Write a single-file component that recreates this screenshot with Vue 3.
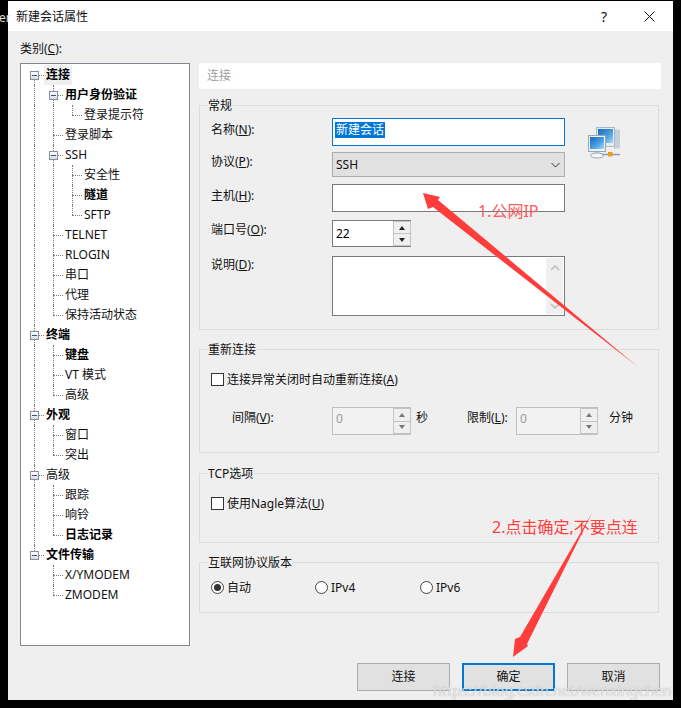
<script setup>
const rows = [
  ['连接', 1, 'xf'], ['用户身份验证', 1, 'v xm'], ['登录提示符', 0, 'v v e'], ['登录脚本', 0, 'v t'],
  ['SSH', 0, 'v xm'], ['安全性', 0, 'v v t'], ['隧道', 1, 'v v t'], ['SFTP', 0, 'v v e'],
  ['TELNET', 0, 'v t'], ['RLOGIN', 0, 'v t'], ['串口', 0, 'v t'], ['代理', 0, 'v t'],
  ['保持活动状态', 0, 'v e'], ['终端', 1, 'xm'], ['键盘', 1, 'v t'], ['VT 模式', 0, 'v t'],
  ['高级', 0, 'v e'], ['外观', 1, 'xm'], ['窗口', 0, 'v t'], ['突出', 0, 'v e'],
  ['高级', 0, 'xm'], ['跟踪', 0, 'v t'], ['响铃', 0, 'v t'], ['日志记录', 1, 'v e'],
  ['文件传输', 1, 'xl'], ['X/YMODEM', 0, 'b t'], ['ZMODEM', 0, 'b e']
].map(([text, bold, cells], i) => ({ id: i, text, bold: !!bold, selected: i === 0, cells: cells.split(' ') }))
</script>

<template>
  <div class="screen">
    <span class="behind">er</span>
    <div class="window">
      <header class="titlebar">
        <span class="title">新建会话属性</span>
        <span class="help">?</span>
        <svg class="close" width="11" height="11" viewBox="0 0 11 11"><path d="M.5.5l10 10M10.5.5l-10 10" stroke="#111" stroke-width="1" fill="none"/></svg>
      </header>
      <div class="body">
        <div class="main">
          <div class="cat-label">类别(<u>C</u>):</div>
          <div class="tree">
            <div v-for="r in rows" :key="r.id" class="tree-row">
              <span v-for="(c, n) in r.cells" :key="n" class="cell" :class="c">
                <span v-if="c[0] === 'x'" class="exp"><i></i></span>
              </span>
              <span class="node" :class="{ bold: r.bold, sel: r.selected }">{{ r.text }}</span>
            </div>
          </div>
          <div class="pane">
            <div class="pane-head">连接</div>

            <section class="group g1">
              <span class="legend">常规</span>
              <div class="g1-inner">
                <div class="form">
                  <div class="frow r1"><label class="lab">名称(<u>N</u>):</label><div class="input focus"><span class="selected">新建会话</span></div></div>
                  <div class="frow r2"><label class="lab">协议(<u>P</u>):</label>
                    <div class="select"><span>SSH</span>
                      <svg width="9" height="6" viewBox="0 0 9 6"><path d="M.5 1l4 4 4-4" stroke="#333" fill="none"/></svg>
                    </div>
                  </div>
                  <div class="frow r3"><label class="lab">主机(<u>H</u>):</label><div class="input plain"></div></div>
                  <div class="frow r4"><label class="lab">端口号(<u>O</u>):</label>
                    <div class="spin port"><span class="val">22</span>
                      <div class="btns"><span class="sb"><i class="up"></i></span><span class="sb"><i class="down"></i></span></div>
                    </div>
                  </div>
                  <div class="frow r5"><label class="lab">说明(<u>D</u>):</label>
                    <div class="textarea">
                      <div class="scroll">
                        <svg width="10" height="6" viewBox="0 0 10 6"><path d="M1 5l4-4 4 4" stroke="#c0c0c0" stroke-width="1.6" fill="none"/></svg>
                        <svg width="10" height="6" viewBox="0 0 10 6"><path d="M1 1l4 4 4-4" stroke="#c0c0c0" stroke-width="1.6" fill="none"/></svg>
                      </div>
                    </div>
                  </div>
                </div>
                <svg class="net" width="32" height="32" viewBox="0 0 32 32">
                  <defs>
                    <linearGradient id="scr" x1="0" y1="0" x2="1" y2="1"><stop offset="0" stop-color="#1668bd"/><stop offset=".6" stop-color="#4fa3e0"/><stop offset="1" stop-color="#a9d8f5"/></linearGradient>
                  </defs>
                  <path d="M26 2l6 1v18l-6 1z" fill="#c4d0da"/>
                  <rect x="8.5" y=".5" width="18" height="19" fill="#e4ebf1" stroke="#a8b8c6"/>
                  <rect x="10" y="2" width="15" height="14" fill="url(#scr)"/>
                  <rect x=".5" y="8.5" width="17" height="16" fill="#f0f3f6" stroke="#95a8b9"/>
                  <rect x="2" y="10" width="14" height="12" fill="url(#scr)"/>
                  <path d="M6 25h6l1 2H5z" fill="#d6dde4"/>
                  <ellipse cx="9" cy="28.5" rx="6.5" ry="2.5" fill="#f4f6f8" stroke="#95a8b9"/>
                  <path d="M14 27.5h18" stroke="#8f9ca8" stroke-width="1.5"/>
                  <rect x="20" y="25" width="4.5" height="4.5" fill="#f09a1a"/>
                </svg>
              </div>
            </section>

            <section class="group g2">
              <span class="legend">重新连接</span>
              <div class="optrow"><span class="check"></span><span>连接异常关闭时自动重新连接(<u>A</u>)</span></div>
              <div class="interval">
                <label class="i-lab">间隔(<u>V</u>):</label>
                <div class="spin dis w79"><span class="val">0</span>
                  <div class="btns"><span class="sb"><i class="up"></i></span><span class="sb"><i class="down"></i></span></div>
                </div>
                <span class="unit1">秒</span>
                <label class="l-lab">限制(<u>L</u>):</label>
                <div class="spin dis w82"><span class="val">0</span>
                  <div class="btns"><span class="sb"><i class="up"></i></span><span class="sb"><i class="down"></i></span></div>
                </div>
                <span class="unit2">分钟</span>
              </div>
            </section>

            <section class="group g3">
              <span class="legend">TCP选项</span>
              <div class="optrow"><span class="check"></span><span>使用Nagle算法(<u>U</u>)</span></div>
            </section>

            <section class="group g4">
              <span class="legend">互联网协议版本</span>
              <div class="radios">
                <div class="radio-opt o1"><span class="radio on"></span><span>自动</span></div>
                <div class="radio-opt o2"><span class="radio"></span><span>IPv4</span></div>
                <div class="radio-opt"><span class="radio"></span><span>IPv6</span></div>
              </div>
            </section>
          </div>
        </div>
        <footer class="footer">
          <button class="btn">连接</button>
          <button class="btn default">确定</button>
          <button class="btn">取消</button>
        </footer>
      </div>
    </div>

    <svg class="arrows" width="681" height="708" viewBox="0 0 681 708">
      <polygon points="423,193 440,197 438,200 638,367 433,207 428,209" fill="#ff3d3d"/>
      <polygon points="513,657 515,639 520,637 592,513 527,644 528,646" fill="#ff3d3d"/>
    </svg>
    <span class="note n1">1.公网IP</span>
    <span class="note n2">2.点击确定,不要点连</span>
    <span class="mark">https://blog.csdn.net/wenxingchen</span>
  </div>
</template>

<style>
html, body { margin: 0; background: #000; }
</style>

<style scoped>
.screen {
  position: relative;
  width: 681px;
  height: 708px;
  overflow: hidden;
  background: #000;
  padding: 1px 8px 8px;
  box-sizing: border-box;
  font-family: "Noto Sans", "Noto Sans CJK SC", sans-serif;
  font-size: 12px;
  color: #000;
}
.behind { position: absolute; left: -1px; top: 10px; color: #ddd; line-height: 16px; }
.window { height: 699px; background: #efefef; display: flex; flex-direction: column; }
.titlebar { height: 30px; flex: none; background: #fff; display: flex; align-items: center; padding: 0 18px 0 8px; box-sizing: border-box; }
.title { flex: 1; color: #111; }
.help { font-size: 14px; margin-right: 37px; color: #111; }
.close { flex: none; }
.body { flex: 1; display: flex; flex-direction: column; }
.main { display: grid; grid-template-columns: 170px 462px; grid-template-rows: 16px 583px; column-gap: 9px; padding: 10px 0 0 12px; row-gap: 6px; }
.cat-label { grid-column: 1; line-height: 16px; color: #111; }
.tree { grid-column: 1; grid-row: 2; border: 1px solid #828790; background: #fff; box-sizing: border-box; padding: 1px 0 0 4px; }
.tree-row { height: 20px; display: flex; align-items: stretch; }
.cell { position: relative; width: 19px; flex: none; }
.cell::before { content: ""; position: absolute; left: 9px; top: 0; bottom: 0; border-left: 1px dotted #7d7d7d; }
.cell::after { content: ""; position: absolute; left: 9px; right: 0; top: 10px; border-top: 1px dotted #7d7d7d; }
.cell.b::before, .cell.b::after, .cell.v::after { display: none; }
.cell.e::before, .cell.xl::before { bottom: 10px; }
.cell.xf::before { top: 10px; }
.exp { position: absolute; left: 5px; top: 6px; width: 9px; height: 9px; box-sizing: border-box; border: 1px solid #8a8f96; background: linear-gradient(#fff, #d5dae6); z-index: 1; }
.exp i { position: absolute; left: 1px; right: 1px; top: 3px; height: 1px; background: #3d4f8c; }
.node { padding: 0 2px; line-height: 20px; height: 20px; white-space: nowrap; color: #111; }
.node.bold { font-weight: 700; color: #000; }
.node.sel { background: #f0f0f0; }

.pane { grid-column: 2; grid-row: 2; }
.pane-head { height: 26px; background: #fff; color: #a0a0a0; line-height: 25px; padding-left: 8px; }
.group { position: relative; width: 460px; box-sizing: border-box; border: 1px solid #dcdcdc; padding-left: 11px; }
.legend { position: absolute; left: 7px; top: -8px; background: #efefef; padding: 0 1px; line-height: 16px; color: #111; }
.g1 { margin-top: 16px; height: 225px; padding-top: 12px; }
.g2 { margin-top: 19px; height: 104px; padding-top: 19px; }
.g3 { margin-top: 20px; height: 70px; padding-top: 19px; }
.g4 { margin-top: 19px; height: 51px; padding-top: 14px; }

.g1-inner { display: flex; align-items: flex-start; }
.form { width: 354px; flex: none; }
.net { margin: 9px 0 0 23px; flex: none; }
.frow { display: flex; align-items: flex-start; }
.lab { width: 121px; flex: none; color: #111; }
.r1, .r3 { line-height: 24px; }
.r2, .r4 { line-height: 20px; }
.r5 { line-height: 18px; }
.r2 { margin-top: 6px; }
.r3 { margin-top: 7px; }
.r4 { margin-top: 8px; }
.r5 { margin-top: 9px; }
.input { width: 233px; height: 28px; box-sizing: border-box; background: #fff; }
.input.focus { border: 1px solid #0078d7; padding: 3px 2px 0; display: flex; align-items: flex-start; }
.input.plain { border: 1px solid #7a7a7a; }
.selected { background: #0078d7; color: #fff; line-height: 16px; padding: 0 1px; }
.select { width: 233px; height: 25px; box-sizing: border-box; background: #e1e1e1; border: 1px solid #adadad; display: flex; align-items: center; justify-content: space-between; padding: 0 4px 0 3px; line-height: 22px; color: #111; }
.textarea { width: 233px; height: 60px; box-sizing: border-box; border: 1px solid #7a7a7a; background: #fff; display: flex; justify-content: flex-end; padding: 1px; }
.scroll { width: 17px; background: #efefef; display: flex; flex-direction: column; justify-content: space-between; align-items: center; padding: 7px 0 5px; box-sizing: border-box; height: 56px; }

.spin { height: 27px; box-sizing: border-box; display: flex; background: #fff; line-height: 25px; }
.spin .val { flex: 1; padding-left: 3px; }
.btns { width: 17px; flex: none; display: flex; flex-direction: column; gap: 1px; padding: 1px 1px 1px 0; background: #c4c4c4; }
.sb { flex: 1; background: #efefef; display: flex; align-items: center; justify-content: center; border-left: 1px solid #c4c4c4; }
.sb i { display: block; width: 0; height: 0; border-left: 3.5px solid transparent; border-right: 3.5px solid transparent; }
.sb .up { border-bottom: 4px solid #222; }
.sb .down { border-top: 4px solid #222; }
.port { width: 79px; border: 1px solid #7a7a7a; border-right: 0; }
.dis { height: 28px; border: 1px solid #bfbfbf; border-right: 0; background: #f2f2f2; color: #9a9a9a; line-height: 21px; }
.dis .sb .up { border-bottom-color: #777; }
.dis .sb .down { border-top-color: #777; }
.w79 { width: 79px; }
.w82 { width: 82px; }

.optrow { display: flex; align-items: center; height: 20px; color: #111; }
.check { width: 13px; height: 13px; box-sizing: border-box; border: 1px solid #333; background: #fff; margin-right: 3px; flex: none; }
.interval { display: flex; align-items: flex-start; height: 28px; margin-top: 18px; padding-left: 21px; color: #111; line-height: 22px; }
.i-lab { width: 100px; flex: none; }
.unit1 { width: 51px; padding-left: 5px; flex: none; box-sizing: content-box; }
.l-lab { width: 49px; flex: none; }
.unit2 { margin-left: 11px; }
.radios { display: flex; height: 20px; color: #111; }
.radio-opt { display: flex; align-items: center; }
.o1 { width: 104px; }
.o2 { width: 105px; }
.radio { position: relative; width: 13px; height: 13px; box-sizing: border-box; border: 1px solid #444; border-radius: 50%; background: #fff; margin-right: 3px; }
.radio.on::after { content: ""; position: absolute; left: 2px; top: 2px; width: 7px; height: 7px; border-radius: 50%; background: #333; }

.footer { display: flex; justify-content: flex-end; gap: 12px; padding-right: 13px; margin-top: 17px; }
.btn { width: 93px; height: 28px; box-sizing: border-box; border: 1px solid #adadad; background: #e1e1e1; font: inherit; color: #111; padding: 0 0 2px; }
.btn.default { border: 2px solid #0078d7; }

.arrows { position: absolute; left: 0; top: 0; pointer-events: none; }
.note { position: absolute; color: #ff4040; font-size: 16px; line-height: 20px; white-space: nowrap; }
.n1 { left: 478px; top: 201px; color: #ff5a5a; }
.n2 { left: 492px; top: 517px; }
.mark { position: absolute; left: 433px; top: 680px; font-size: 14.5px; line-height: 20px; color: rgba(255,255,255,.7); text-shadow: 0 0 1px rgba(110,110,110,.6); white-space: nowrap; }
</style>
